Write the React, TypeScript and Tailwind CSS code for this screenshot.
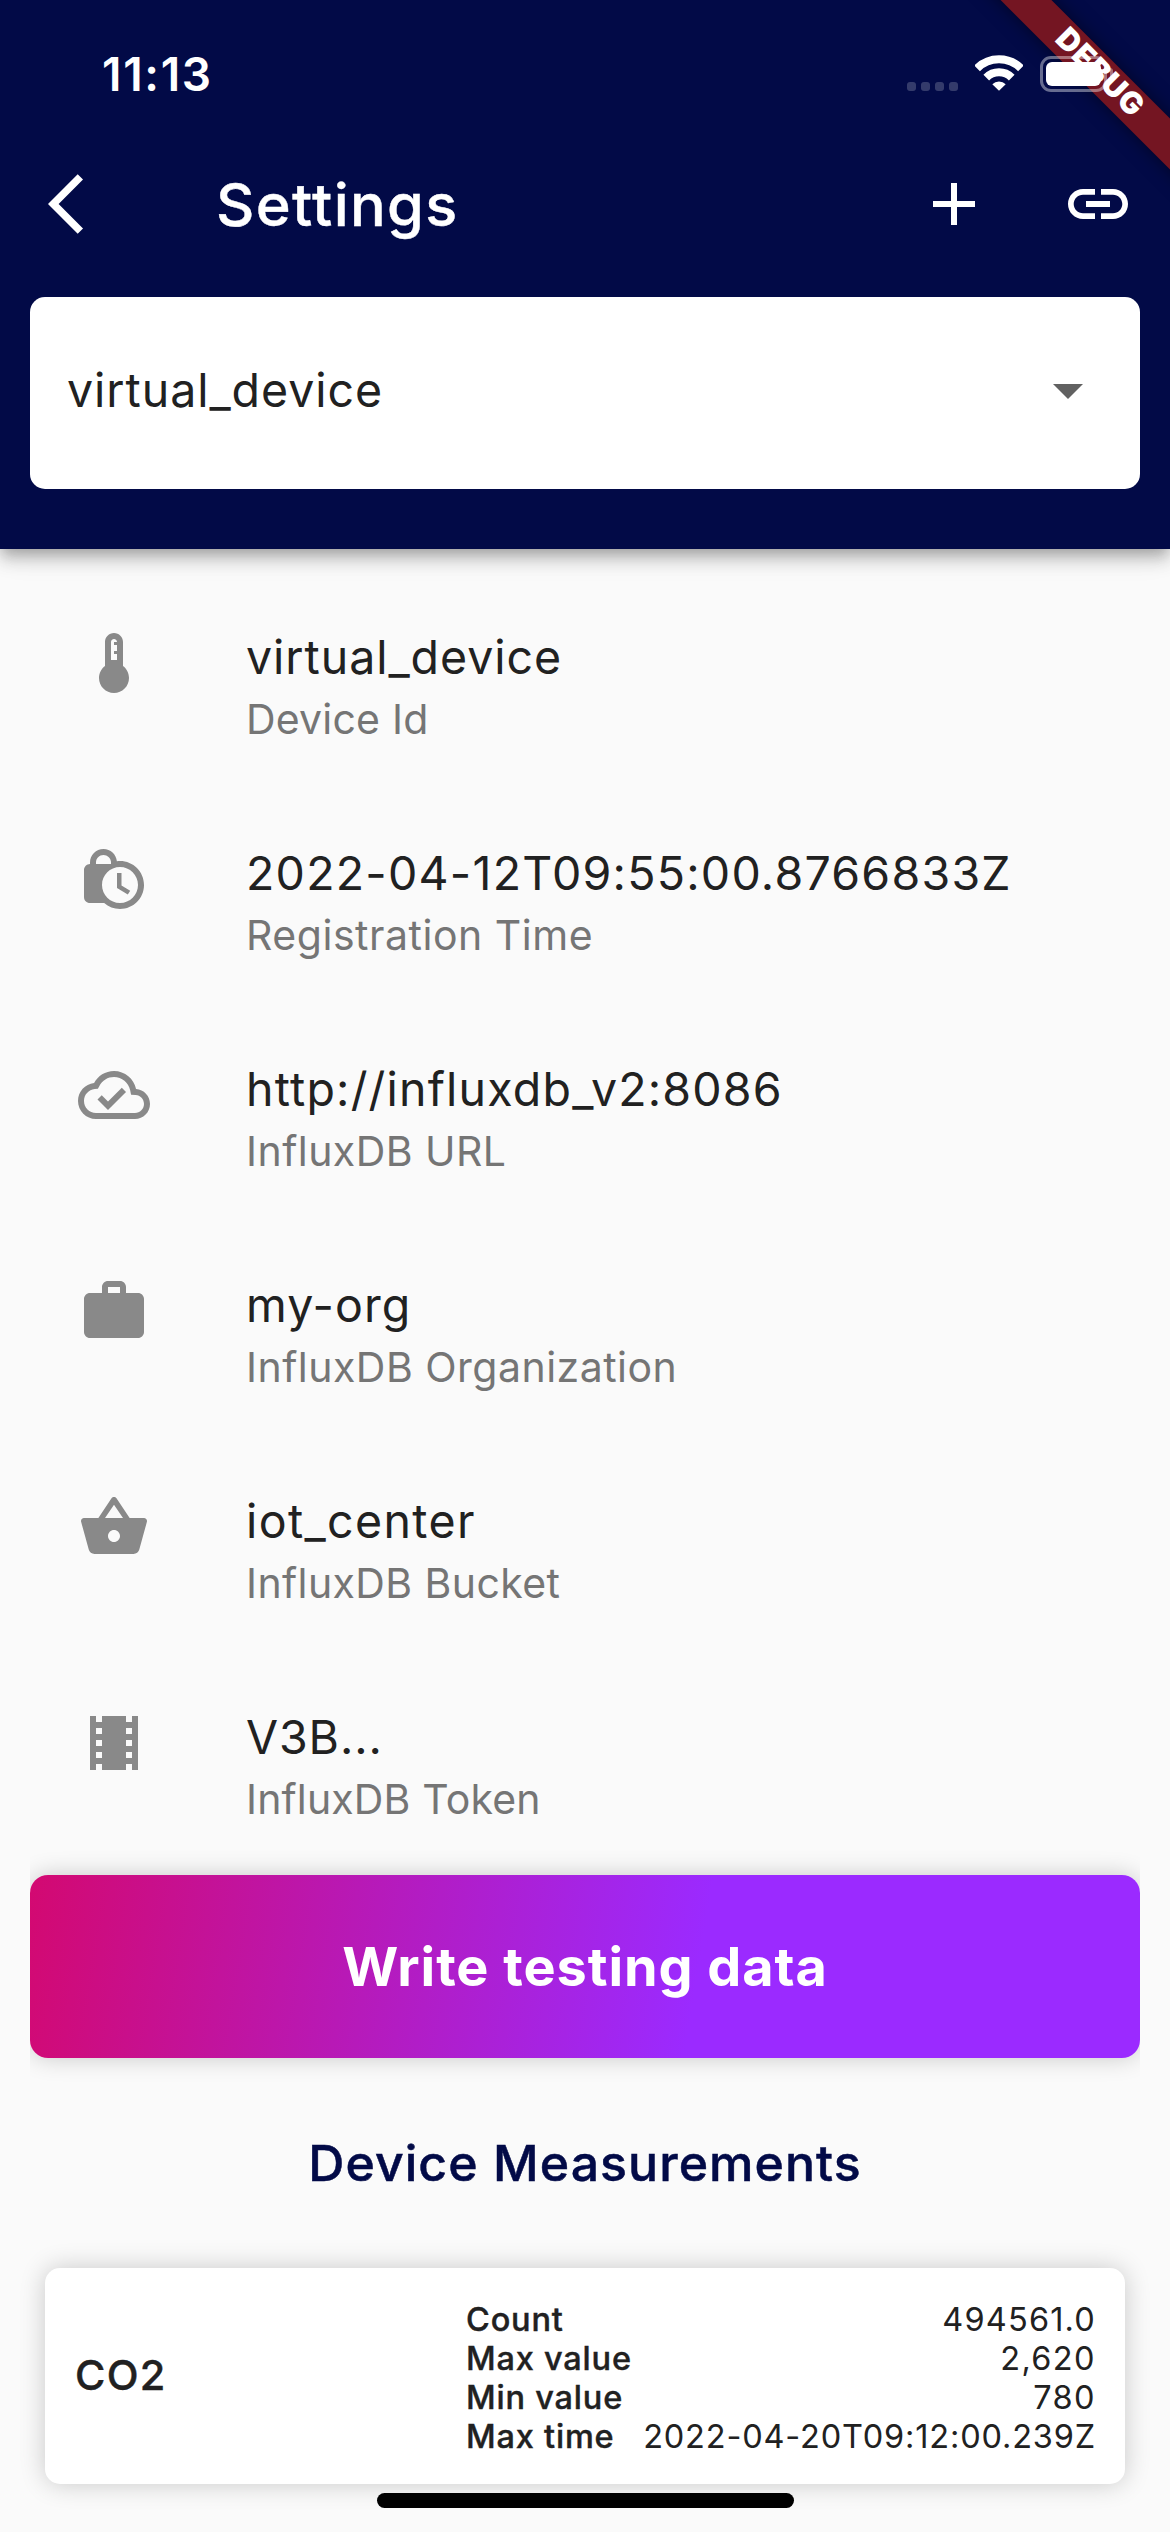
import type { ReactNode } from "react";

function Icon({ d, className = "" }: { d: string; className?: string }) {
  return (
    <svg viewBox="0 0 24 24" className={`size-[72px] shrink-0 ${className}`} fill="currentColor" aria-hidden="true">
      <path d={d} />
    </svg>
  );
}

const icons = {
  back: "M11.67 3.87L9.9 2.1 0 12l9.9 9.9 1.77-1.77L3.54 12z",
  add: "M19 13h-6v6h-2v-6H5v-2h6V5h2v6h6v2z",
  link: "M3.9 12c0-1.71 1.39-3.1 3.1-3.1h4V7H7c-2.76 0-5 2.24-5 5s2.24 5 5 5h4v-1.9H7c-1.71 0-3.1-1.39-3.1-3.1zM8 13h8v-2H8v2zm9-6h-4v1.9h4c1.71 0 3.1 1.39 3.1 3.1s-1.39 3.1-3.1 3.1h-4V17h4c2.76 0 5-2.24 5-5s-2.24-5-5-5z",
  dropDown: "M7 10l5 5 5-5z",
  thermostat:
    "M15 13V5c0-1.66-1.34-3-3-3S9 3.34 9 5v8c-1.21.91-2 2.37-2 4 0 2.76 2.24 5 5 5s5-2.24 5-5c0-1.63-.79-3.09-2-4zm-4-8c0-.55.45-1 1-1s1 .45 1 1h-1v1h1v2h-1v1h1v2h-2V5z",
  lockClock:
    "M14.5 14.2l2.9 1.7-.8 1.3L13 15v-5h1.5v4.2zM22 14c0 4.41-3.59 8-8 8-2.02 0-3.86-.76-5.27-2H4c-1.15 0-2-.85-2-2V9c0-1.12.89-1.96 2-2v-.5C4 4.01 6.01 2 8.5 2c2.34 0 4.24 1.79 4.46 4.08.34-.05.69-.08 1.04-.08 4.41 0 8 3.59 8 8zM6 7h5v-.74C10.88 4.99 9.8 4 8.5 4 7.12 4 6 5.12 6 6.5V7zm14 7c0-3.31-2.69-6-6-6s-6 2.69-6 6 2.69 6 6 6 6-2.69 6-6z",
  cloudDone:
    "M19.35 10.04C18.67 6.59 15.64 4 12 4 9.11 4 6.61 5.64 5.36 8.04 2.35 8.36 0 10.9 0 14c0 3.31 2.69 6 6 6h13c2.76 0 5-2.24 5-5 0-2.64-2.05-4.78-4.65-4.96zM19 18H6c-2.21 0-4-1.79-4-4 0-2.05 1.53-3.76 3.56-3.97l1.07-.11.5-.95C8.08 7.14 9.94 6 12 6c2.62 0 4.88 1.86 5.39 4.43l.3 1.5 1.53.11c1.56.1 2.78 1.41 2.78 2.96 0 1.65-1.35 3-3 3zm-9-3.82l-2.09-2.09L6.5 13.5 10 17l6.01-6.01-1.41-1.41z",
  work: "M20 6h-4V4c0-1.11-.89-2-2-2h-4c-1.11 0-2 .89-2 2v2H4c-1.11 0-2 .89-2 2v11c0 1.11.89 2 2 2h16c1.11 0 2-.89 2-2V8c0-1.11-.89-2-2-2zm-6 0h-4V4h4v2z",
  basket:
    "M17.21 9l-4.38-6.56c-.19-.28-.51-.42-.83-.42-.32 0-.64.14-.83.43L6.79 9H2c-.55 0-1 .45-1 1 0 .09.01.18.04.27l2.54 9.27c.23.84 1 1.46 1.92 1.46h13c.92 0 1.69-.62 1.93-1.46l2.54-9.27L23 10c0-.55-.45-1-1-1h-4.79zM9 9l3-4.4L15 9H9zm3 8c-1.1 0-2-.9-2-2s.9-2 2-2 2 .9 2 2-.9 2-2 2z",
  film: "M18 3v2h-2V3H8v2H6V3H4v18h2v-2h2v2h8v-2h2v2h2V3h-2zM8 17H6v-2h2v2zm0-4H6v-2h2v2zm0-4H6V7h2v2zm10 8h-2v-2h2v2zm0-4h-2v-2h2v2zm0-4h-2V7h2v2z",
};

const details = [
  { icon: icons.thermostat, value: "virtual_device", label: "Device Id", spacing: "tracking-[0.96px]", labelSpacing: "tracking-[0.2px]" },
  { icon: icons.lockClock, value: "2022-04-12T09:55:00.8766833Z", label: "Registration Time", spacing: "tracking-[1.24px]", labelSpacing: "tracking-[0.53px]" },
  { icon: icons.cloudDone, value: "http://influxdb_v2:8086", label: "InfluxDB URL", spacing: "tracking-[1.2px]", labelSpacing: "tracking-[0.45px]" },
  { icon: icons.work, value: "my-org", label: "InfluxDB Organization", spacing: "tracking-[1.1px]", labelSpacing: "tracking-[0.48px]" },
  { icon: icons.basket, value: "iot_center", label: "InfluxDB Bucket", spacing: "tracking-[1.37px]", labelSpacing: "tracking-[0.4px]" },
  { icon: icons.film, value: "V3B...", label: "InfluxDB Token", spacing: "tracking-[0.9px]", labelSpacing: "tracking-[0.15px]" },
];

const stats = [
  { label: "Count", value: "494561.0", spacing: "tracking-[1.17px]" },
  { label: "Max value", value: "2,620", spacing: "tracking-[1.4px]" },
  { label: "Min value", value: "780", spacing: "tracking-[1.4px]" },
  { label: "Max time", value: "2022-04-20T09:12:00.239Z", spacing: "tracking-[0.83px]" },
];

function DebugBanner() {
  return (
    <div className="absolute left-[898px] top-[54px] flex h-9 w-[400px] rotate-45 items-center justify-center bg-[#741522] pb-[3px] pl-1 text-[30.5px] leading-none font-black tracking-[0.97px] text-white shadow-[0_0_18px_rgba(0,0,0,0.5)]">
      DEBUG
    </div>
  );
}

function StatusBar() {
  return (
    <div className="relative z-10 flex h-[120px] items-start justify-between pr-[57px] pl-[102px] text-white">
      <span className="mt-[44px] text-[46px] leading-[60px] font-semibold tracking-[1.7px]">11:13</span>
      <div className="mt-[54px] flex h-[38px] items-start">
        <div className="mt-[28px] flex gap-[5px]">
          {[0, 1, 2, 3].map((i) => (
            <span key={i} className="size-[9px] rounded-[3px] bg-white/20" />
          ))}
        </div>
        <svg viewBox="0 0 48 38" className="ml-[17px] h-[38px] w-[48px]" fill="none" aria-hidden="true">
          <path d="M2.08 14.38A31 31 0 0 1 45.92 14.38" stroke="#fff" strokeWidth="8" />
          <path d="M11.27 23.57A18 18 0 0 1 36.73 23.57" stroke="#fff" strokeWidth="8" />
          <path d="M24 36.8L17.3 30.2A9.4 9.4 0 0 1 30.7 30.2Z" fill="#fff" />
        </svg>
        <div className="mt-[2px] ml-[17px] flex items-center gap-[3px]">
          <div className="h-9 w-[67px] rounded-[11px] border-[3px] border-white/40 p-[3px]">
            <div className="h-full w-full rounded-[6px] bg-white" />
          </div>
          <div className="h-3 w-[3px] rounded-r-full bg-white/40" />
        </div>
      </div>
    </div>
  );
}

function Header({ children }: { children: ReactNode }) {
  return (
    <header className="h-[549px] shrink-0 bg-[#020a47] shadow-[0_6px_12px_-3px_rgba(0,0,0,0.2),0_12px_15px_0_rgba(0,0,0,0.14),0_3px_30px_0_rgba(0,0,0,0.12)]">
      <StatusBar />
      <div className="flex h-[168px] items-center pr-9 pl-12 text-white">
        <Icon d={icons.back} />
        <h1 className="ml-24 flex-1 text-[59.5px] leading-[72px] font-medium tracking-[1.35px] [-webkit-text-stroke:0.4px_currentColor]">
          Settings
        </h1>
        <Icon d={icons.add} className="mr-[72px]" />
        <Icon d={icons.link} />
      </div>
      {children}
    </header>
  );
}

export default function App() {
  return (
    <div className="relative flex h-[2532px] w-[1170px] flex-col overflow-hidden bg-[#fafafa] font-['Inter',sans-serif] text-[#212121]">
      <DebugBanner />
      <Header>
        <div className="mx-[30px] mt-[9px] flex h-48 items-center justify-between rounded-[15px] bg-white pr-9 pb-1.5 pl-[37px]">
          <span className="text-[46.5px] leading-[60px] tracking-[0.96px]">virtual_device</span>
          <Icon d={icons.dropDown} className="text-[#616161]" />
        </div>
      </Header>

      <ul className="flex flex-col gap-[30px] pt-12">
        {details.map((row) => (
          <li key={row.label} className="flex h-[186px] items-start gap-24 pt-[30px] pl-[78px]">
            <Icon d={row.icon} className="text-[#898989]" />
            <div>
              <p className={`text-[46.5px] leading-[60px] ${row.spacing}`}>{row.value}</p>
              <p className={`text-[41px] leading-[64px] text-[#757575] ${row.labelSpacing}`}>{row.label}</p>
            </div>
          </li>
        ))}
      </ul>

      <div className="mx-[30px] mt-3 [clip-path:inset(-40px_0px)]">
        <button className="flex h-[183px] w-full items-center justify-center rounded-[18px] bg-[linear-gradient(99.36deg,#d30971_0%,#9b2aff_60%)] text-[54px] font-bold tracking-[0.94px] text-white shadow-[0_0_24px_rgba(0,0,0,0.2)]">
          Write testing data
        </button>
      </div>

      <h2 className="mt-[75px] text-center text-[50px] leading-[60px] font-medium tracking-[1.05px] text-[#020a47] [-webkit-text-stroke:0.5px_currentColor]">
        Device Measurements
      </h2>

      <section className="mx-[45px] mt-[75px] flex h-[216px] items-center rounded-[15px] bg-white pr-[29px] pb-0.5 pl-[30px] shadow-[0_0_26px_rgba(0,0,0,0.2)]">
        <h3 className="w-[391px] text-[41.5px] leading-[48px] font-medium tracking-[1.3px] [-webkit-text-stroke:0.4px_currentColor]">
          CO2
        </h3>
        <dl className="flex-1 pt-1.5 text-[32.5px] leading-[39px]">
          {stats.map((s) => (
            <div key={s.label} className="flex justify-between">
              <dt className="font-medium tracking-[0.8px] [-webkit-text-stroke:0.4px_currentColor]">{s.label}</dt>
              <dd className={s.spacing}>{s.value}</dd>
            </div>
          ))}
        </dl>
      </section>

      <div className="absolute top-[2493px] left-[377px] h-[15px] w-[417px] rounded-full bg-black" />
    </div>
  );
}
